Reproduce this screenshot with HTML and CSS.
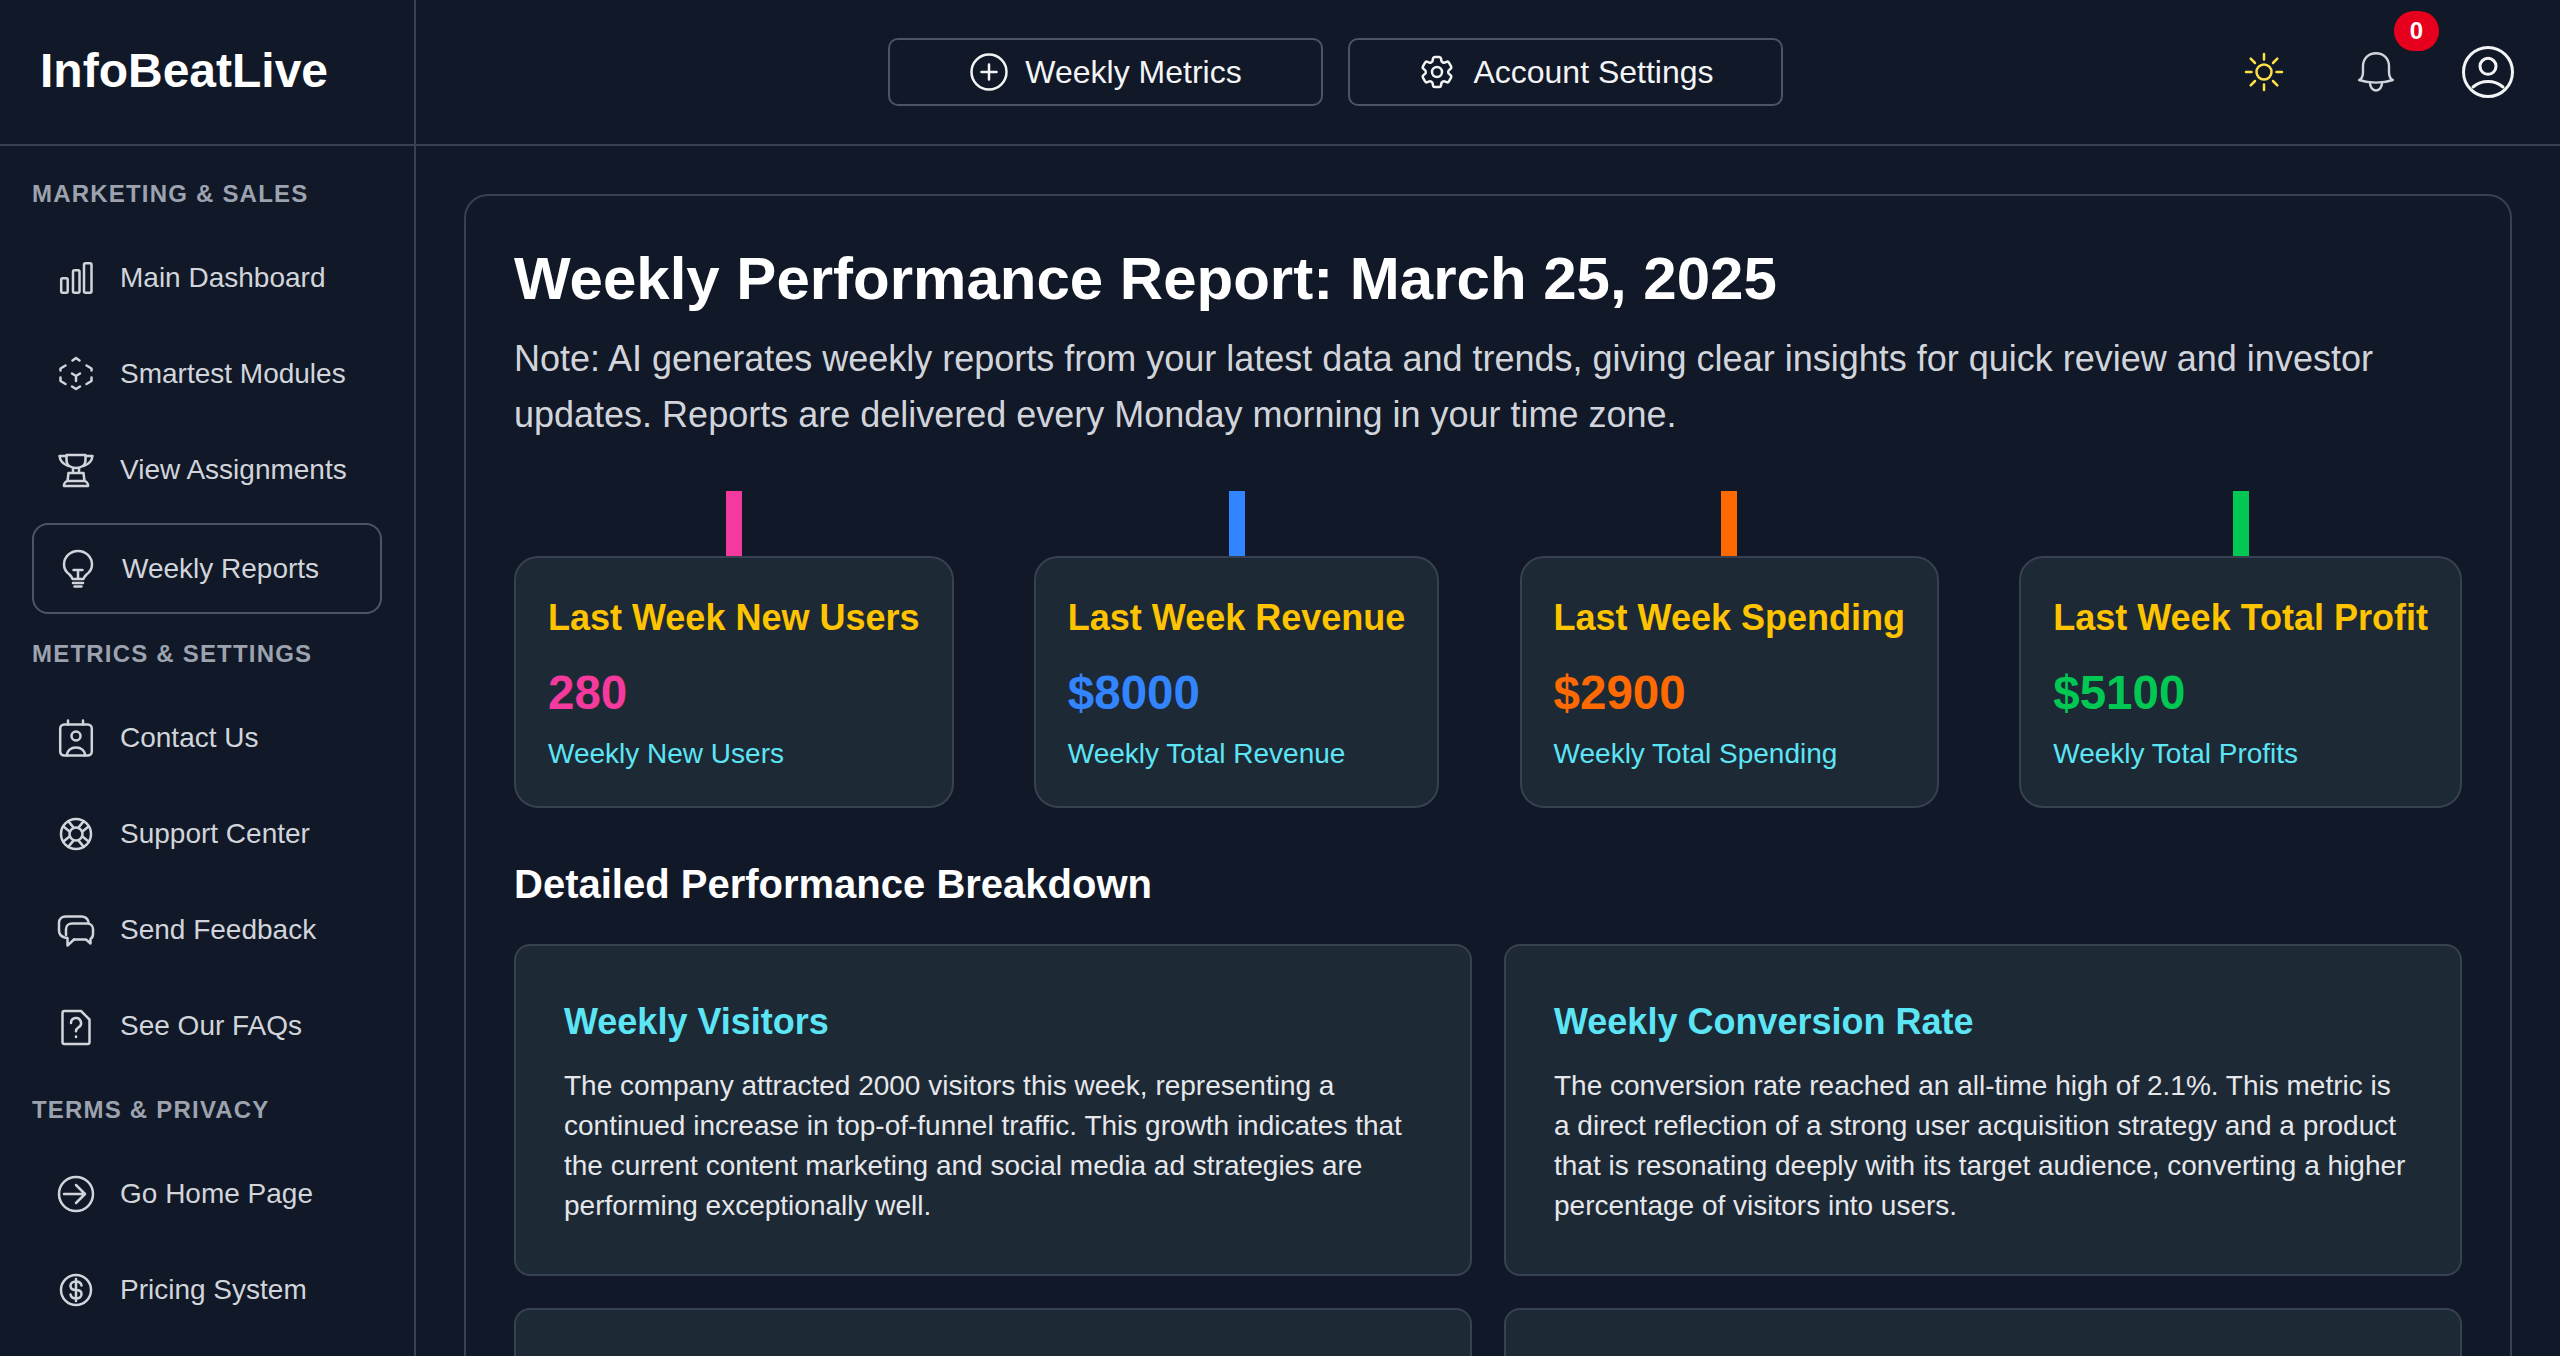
FILE: index.html
```html
<!DOCTYPE html>
<html lang="en">
<head>
    <meta charset="UTF-8">
    <meta name="viewport" content="width=device-width, initial-scale=1.0">
    <title>InfoBeatLive - Weekly Reports</title>
    <link rel="stylesheet" href="styles.css">
</head>
<body>
    <div class="app">
        <!-- Sidebar -->
        <aside class="sidebar">
            <div class="logo">InfoBeatLive</div>
            <nav class="side-nav">
                <h4 class="nav-title first">MARKETING &amp; SALES</h4>
                <a class="nav-item"><svg class="nav-icon" viewBox="0 0 40 40"><rect x="5.200" y="20.200" width="6.500" height="14.600" rx="1.500"/><rect x="17" y="12.200" width="6.500" height="22.600" rx="1.500"/><rect x="28" y="5.200" width="7.500" height="29.600" rx="1.500"/></svg>Main Dashboard</a>
                <a class="nav-item"><svg class="nav-icon" viewBox="0 0 40 40"><path d="M16.500 6.500 20 4l3.500 2.500M9.500 11.500l-5 3v2M30.500 11.500l5 3v2M4.500 23.500v3.500l5 3M35.500 23.500v3.500l-5 3M16 32.500l4 2.500 4-2.500M16 19.500l4 2.500 4-2.500M20 22v5"/></svg>Smartest Modules</a>
                <a class="nav-item"><svg class="nav-icon" viewBox="0 0 40 40"><path d="M10.500 5h19v5c0 5-4 8-9.500 8s-9.500-3-9.500-8zM10.500 6h-7c.5 5 3 8 9 10M29.500 6h7c-.5 5-3 8-9 10M17 18v5M23 18v5M12.500 23h15l1 8h-17zM8 36c0-3 2-5 4-5h16c2 0 4 2 4 5z"/></svg>View Assignments</a>
                <a class="nav-item active"><svg class="nav-icon" viewBox="0 0 40 40"><path d="M14.500 30c-.5-2-1.500-3-3-4.500C8 23 6 19.500 6 15.500a14 13.500 0 0 1 28 0c0 4-2 7.500-5.500 10-1.500 1.500-2.500 2.500-3 4.500zM15 34h10M16.500 37.500h7M15.500 21h9M20 21v9"/></svg>Weekly Reports</a>
                <h4 class="nav-title">METRICS &amp; SETTINGS</h4>
                <a class="nav-item"><svg class="nav-icon" viewBox="0 0 40 40"><rect x="4.200" y="6.500" width="31.600" height="31" rx="4"/><path d="M12 2.500v4M27 2.500v4M11 37.500c0-5 4-8 9-8s9 3 9 8"/><circle cx="20" cy="18" r="4.500"/></svg>Contact Us</a>
                <a class="nav-item"><svg class="nav-icon" viewBox="0 0 40 40"><circle cx="20" cy="20" r="15"/><circle cx="20" cy="20" r="6.500"/><path d="M7.100 12.300l6.800 5.500M12.300 7.100l5.500 6.800M32.900 12.300l-6.800 5.500M27.700 7.100l-5.500 6.800M7.100 27.700l6.800-5.500M12.300 32.900l5.500-6.800M32.900 27.700l-6.800-5.500M27.700 32.900l-5.500-6.800"/></svg>Support Center</a>
                <a class="nav-item"><svg class="nav-icon" viewBox="0 0 40 40"><path d="M32.500 12c-1-3.500-3.500-5.500-7-5.500h-16C6 6.500 3 9 3 12.500v8c0 3.500 2.500 6 5.500 7l3 .5v7.500l6.500-6"/><path d="M18 29.500h12l4.500 4v-4.500c1.500-1 2.500-3 2.500-5v-5c0-3-2.500-5.500-6-5.500H16c-3.500 0-6 2.500-6 5.500V25"/></svg>Send Feedback</a>
                <a class="nav-item"><svg class="nav-icon" viewBox="0 0 40 40"><path d="M8.500 5H25l8.500 8.500V36a2 2 0 0 1-2 2h-23a2 2 0 0 1-2-2V7a2 2 0 0 1 2-2z"/><path d="M15 17a5 5 0 1 1 7.500 4.300c-1.500 1-2.500 2-2.500 4M20 30.500v.5"/></svg>See Our FAQs</a>
                <h4 class="nav-title">TERMS &amp; PRIVACY</h4>
                <a class="nav-item"><svg class="nav-icon" viewBox="0 0 40 40"><circle cx="20" cy="20" r="17"/><path d="M8 20h20M20 11l9 9-9 9"/></svg>Go Home Page</a>
                <a class="nav-item"><svg class="nav-icon" viewBox="0 0 40 40"><circle cx="20" cy="20" r="15"/><path d="M25.500 15.500c-.5-2.500-2.500-4-5.500-4-3.500 0-5.500 2-5.500 4.500s2 4 5.500 4 5.500 1.500 5.500 4-2 4.500-5.500 4.500c-3 0-5-1.500-5.500-4M20 9v22"/></svg>Pricing System</a>
            </nav>
        </aside>

        <div class="main-area">
            <!-- Top bar -->
            <header class="topbar">
                <div class="top-buttons">
                    <button class="top-btn"><svg class="btn-icon" viewBox="0 0 24 24"><circle cx="12" cy="12" r="10.500"/><path d="M12 7.500v9M7.500 12h9"/></svg>Weekly Metrics</button>
                    <button class="top-btn"><svg class="btn-icon" viewBox="0 0 24 24"><path d="M9.594 3.940c.09-.542.56-.94 1.110-.94h2.593c.55 0 1.020.398 1.110.94l.213 1.281c.063.374.313.686.645.870.074.040.147.083.22.127.325.196.72.257 1.075.124l1.217-.456a1.125 1.125 0 0 1 1.370.49l1.296 2.247a1.125 1.125 0 0 1-.26 1.431l-1.003.827c-.293.241-.438.613-.43.992a7.723 7.723 0 0 1 0 .255c-.008.378.137.75.43.991l1.004.827c.424.35.534.955.26 1.430l-1.298 2.247a1.125 1.125 0 0 1-1.369.491l-1.217-.456c-.355-.133-.75-.072-1.076.124a6.470 6.470 0 0 1-.22.128c-.331.183-.581.495-.644.869l-.213 1.281c-.09.543-.56.94-1.110.94h-2.594c-.55 0-1.019-.398-1.110-.94l-.213-1.281c-.062-.374-.312-.686-.644-.87a6.520 6.520 0 0 1-.22-.127c-.325-.196-.72-.257-1.076-.124l-1.217.456a1.125 1.125 0 0 1-1.369-.49l-1.297-2.247a1.125 1.125 0 0 1 .26-1.431l1.004-.827c.292-.24.437-.613.43-.991a6.932 6.932 0 0 1 0-.255c.007-.38-.138-.751-.43-.992l-1.004-.827a1.125 1.125 0 0 1-.26-1.430l1.297-2.247a1.125 1.125 0 0 1 1.370-.491l1.216.456c.356.133.751.072 1.076-.124.072-.044.146-.086.22-.128.332-.183.582-.495.644-.869l.214-1.280z"/><circle cx="12" cy="12" r="3"/></svg>Account Settings</button>
                </div>
                <div class="top-icons">
                    <svg class="sun" viewBox="0 0 40 40"><circle cx="20" cy="20" r="7.500"/><path d="M20 2v5.500M20 32.500V38M2 20h5.500M32.500 20H38M6.700 6.700l4.300 4.300M33.300 6.700 29 11M6.700 33.300 11 29M33.300 33.300 29 29"/></svg>
                    <div class="bell-wrap">
                        <svg class="bell" viewBox="0 0 36 40"><path d="M1.200 28c3-1.500 3.800-4 3.800-8v-6C5 6.500 10.500 1.200 18 1.200S31 6.500 31 14v6c0 4 .8 6.500 3.800 8-10 3.500-23.600 3.500-33.600 0z"/><path d="M12 31c0 4 2.500 7.500 6 7.500s6-3.500 6-7.500"/></svg>
                        <span class="badge">0</span>
                    </div>
                    <svg class="user" viewBox="0 0 52 52"><circle cx="26" cy="26" r="24.500"/><circle cx="26" cy="20.300" r="8"/><path d="M11 41c4-3.500 9-5.500 15-5.500s11 2 15 5.500"/></svg>
                </div>
            </header>

            <!-- Report -->
            <main class="content">
                <section class="report">
                    <h1>Weekly Performance Report: March 25, 2025</h1>
                    <p class="note">Note: AI generates weekly reports from your latest data and trends, giving clear insights for quick review and investor updates. Reports are delivered every Monday morning in your time zone.</p>

                    <div class="stats">
                        <div class="stat pink">
                            <span class="stat-bar"></span>
                            <div class="stat-card">
                                <h3>Last Week New Users</h3>
                                <div class="stat-value">280</div>
                                <div class="stat-label">Weekly New Users</div>
                            </div>
                        </div>
                        <div class="stat blue">
                            <span class="stat-bar"></span>
                            <div class="stat-card">
                                <h3>Last Week Revenue</h3>
                                <div class="stat-value">$8000</div>
                                <div class="stat-label">Weekly Total Revenue</div>
                            </div>
                        </div>
                        <div class="stat orange">
                            <span class="stat-bar"></span>
                            <div class="stat-card">
                                <h3>Last Week Spending</h3>
                                <div class="stat-value">$2900</div>
                                <div class="stat-label">Weekly Total Spending</div>
                            </div>
                        </div>
                        <div class="stat green">
                            <span class="stat-bar"></span>
                            <div class="stat-card">
                                <h3>Last Week Total Profit</h3>
                                <div class="stat-value">$5100</div>
                                <div class="stat-label">Weekly Total Profits</div>
                            </div>
                        </div>
                    </div>

                    <h2>Detailed Performance Breakdown</h2>
                    <div class="details">
                        <div class="detail-card">
                            <h3>Weekly Visitors</h3>
                            <p>The company attracted 2000 visitors this week, representing a continued increase in top-of-funnel traffic. This growth indicates that the current content marketing and social media ad strategies are performing exceptionally well.</p>
                        </div>
                        <div class="detail-card">
                            <h3>Weekly Conversion Rate</h3>
                            <p>The conversion rate reached an all-time high of 2.1%. This metric is a direct reflection of a strong user acquisition strategy and a product that is resonating deeply with its target audience, converting a higher percentage of visitors into users.</p>
                        </div>
                        <div class="detail-card"></div>
                        <div class="detail-card"></div>
                    </div>
                </section>
            </main>
        </div>
    </div>
</body>
</html>
```

FILE: styles.css
```css
/* Basic Reset */
* {
    margin: 0;
    padding: 0;
    box-sizing: border-box;
}

html, body {
    height: 100%;
    overflow: hidden;
}

body {
    font-family: "Liberation Sans", Arial, sans-serif;
    background: #111827;
    color: #ffffff;
}

.app {
    display: flex;
    height: 100vh;
}

/* Sidebar */
.sidebar {
    width: 416px;
    flex-shrink: 0;
    border-right: 2px solid #374151;
    overflow: hidden;
}

.logo {
    height: 146px;
    border-bottom: 2px solid #374151;
    padding: 0 0 3px 40px;
    display: flex;
    align-items: center;
    font-size: 48px;
    font-weight: 700;
}

.side-nav {
    padding: 0 32px;
}

.nav-title {
    font-size: 24px;
    line-height: 32px;
    font-weight: 700;
    letter-spacing: 1.2px;
    color: #9ca3af;
    margin-top: 24px;
}

.nav-title.first {
    margin-top: 32px;
}

.nav-item {
    display: flex;
    align-items: center;
    gap: 24px;
    height: 88px;
    margin-top: 8px;
    padding-left: 22px;
    font-size: 28px;
    color: #d1d5db;
    border: 2px solid transparent;
    border-radius: 16px;
}

.nav-title + .nav-item {
    margin-top: 24px;
}

.nav-item.active {
    border-color: #4b5563;
    height: 91px;
    margin-top: 9px;
    padding-left: 24px;
}

.nav-icon {
    width: 40px;
    height: 40px;
    flex-shrink: 0;
    fill: none;
    stroke: #d1d5db;
    stroke-width: 2.5;
    stroke-linecap: round;
    stroke-linejoin: round;
}

/* Top bar */
.main-area {
    flex: 1;
    min-width: 0;
    display: flex;
    flex-direction: column;
}

.topbar {
    height: 146px;
    flex-shrink: 0;
    border-bottom: 2px solid #374151;
    display: flex;
    align-items: center;
    padding: 0 46px 0 472px;
}

.top-buttons {
    display: flex;
    gap: 25px;
}

.top-btn {
    width: 435px;
    height: 68px;
    display: flex;
    align-items: center;
    justify-content: center;
    gap: 16px;
    background: transparent;
    border: 2px solid #4b5563;
    border-radius: 10px;
    color: #f3f4f6;
    font-family: inherit;
    font-size: 32px;
}

.btn-icon {
    width: 40px;
    height: 40px;
    fill: none;
    stroke: #f3f4f6;
    stroke-width: 1.5;
    stroke-linecap: round;
    stroke-linejoin: round;
}

.top-icons {
    margin-left: auto;
    display: flex;
    align-items: center;
    gap: 68px;
}

.sun {
    width: 40px;
    height: 40px;
    margin-right: 6px;
    fill: none;
    stroke: #fde047;
    stroke-width: 2.5;
    stroke-linecap: round;
}

.bell-wrap {
    position: relative;
    display: flex;
}

.bell {
    width: 36px;
    height: 40px;
    fill: none;
    stroke: #d1d5db;
    stroke-width: 2.4;
    stroke-linecap: round;
    stroke-linejoin: round;
}

.badge {
    position: absolute;
    top: -41px;
    left: 36px;
    width: 45px;
    height: 40px;
    border-radius: 20px;
    background: #e7001e;
    color: #ffffff;
    font-size: 24px;
    font-weight: 700;
    display: flex;
    align-items: center;
    justify-content: center;
}

.user {
    width: 52px;
    height: 52px;
    fill: none;
    stroke: #f3f4f6;
    stroke-width: 3;
    stroke-linecap: round;
}

/* Report */
.content {
    flex: 1;
    padding: 48px 48px 0;
    overflow: hidden;
}

.report {
    border: 2px solid #374151;
    border-radius: 24px;
    padding: 49px 48px 48px;
}

.report h1 {
    font-size: 60px;
    line-height: 68px;
    font-weight: 700;
}

.note {
    font-size: 36px;
    line-height: 56px;
    color: #d1d5db;
    margin-top: 18px;
}

.stats {
    display: flex;
    justify-content: space-between;
    margin-top: 48px;
}

.stat {
    display: flex;
    flex-direction: column;
    align-items: center;
}

.stat-bar {
    width: 16px;
    height: 65px;
}

.stat-card {
    background: #1e2936;
    border: 2px solid #374151;
    border-radius: 24px;
    padding: 33px 32px 34px;
    width: 100%;
}

.stat-card h3 {
    font-size: 36px;
    line-height: 54px;
    font-weight: 700;
    color: #ffc400;
    white-space: nowrap;
}

.stat-value {
    font-size: 47.5px;
    line-height: 56px;
    font-weight: 700;
    margin-top: 20px;
}

.stat-label {
    font-size: 28px;
    line-height: 36px;
    color: #5ce5f5;
    margin-top: 15px;
}

.pink .stat-bar { background: #f43a9c; }
.pink .stat-value { color: #f43a9c; }
.blue .stat-bar { background: #3385ff; }
.blue .stat-value { color: #3385ff; }
.orange .stat-bar { background: #ff6a00; }
.orange .stat-value { color: #ff6a00; }
.green .stat-bar { background: #00c853; }
.green .stat-value { color: #00c853; }

/* Breakdown */
.report h2 {
    font-size: 40px;
    line-height: 48px;
    font-weight: 700;
    margin-top: 52px;
}

.details {
    display: grid;
    grid-template-columns: 1fr 1fr;
    gap: 32px;
    margin-top: 36px;
}

.detail-card {
    background: #1e2936;
    border: 2px solid #374151;
    border-radius: 16px;
    padding: 48px;
    min-height: 332px;
}

.detail-card h3 {
    font-size: 36px;
    line-height: 56px;
    font-weight: 700;
    color: #5ce5f5;
}

.detail-card p {
    font-size: 28px;
    line-height: 40px;
    color: #e5e7eb;
    margin-top: 16px;
}
```
